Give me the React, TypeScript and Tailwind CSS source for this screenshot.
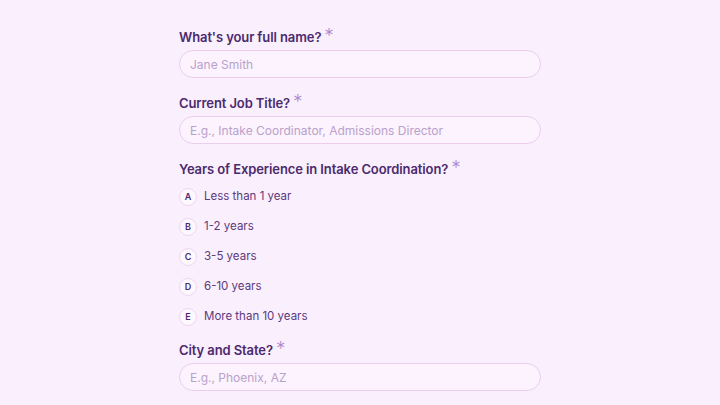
const font = { fontFamily: 'Inter, "Noto Sans", sans-serif' };

function Label({ text }: { text: string }) {
  return (
    <div className="h-[20px] flex items-start text-[13px] leading-[20px] font-semibold text-[#4b2a6e] tracking-[-0.1px]">
      <span>{text}</span>
      <span className="ml-[3px] text-[19px] leading-[17px] font-light text-[#ad88cd]">*</span>
    </div>
  );
}

function Input({ placeholder }: { placeholder: string }) {
  return (
    <input
      placeholder={placeholder}
      className="mt-[3px] w-full h-[28px] rounded-full border border-[#edcdef] bg-[#fcf3fe] px-[10px] text-[12px] text-[#4b2a6e] placeholder:text-[#b9a1cb] outline-none"
      style={font}
    />
  );
}

export default function App() {
  const options = [
    { key: 'A', label: 'Less than 1 year' },
    { key: 'B', label: '1-2 years' },
    { key: 'C', label: '3-5 years' },
    { key: 'D', label: '6-10 years' },
    { key: 'E', label: 'More than 10 years' },
  ];

  return (
    <div className="w-[720px] h-[405px] overflow-hidden bg-[#faeffd]" style={font}>
      <div className="ml-[179px] w-[362px] pt-[27px] flex flex-col">
        <Label text="What's your full name?" />
        <Input placeholder="Jane Smith" />

        <div className="mt-[15px]">
          <Label text="Current Job Title?" />
        </div>
        <Input placeholder="E.g., Intake Coordinator, Admissions Director" />

        <div className="mt-[15px]">
          <Label text="Years of Experience in Intake Coordination?" />
        </div>
        <div className="mt-[9px] flex flex-col gap-[12px]">
          {options.map((o) => (
            <div key={o.key} className="flex items-center h-[18px]">
              <div className="w-[18px] h-[18px] rounded-full border border-[#efd6f1] bg-[#fdf7fe] flex items-center justify-center text-[9px] font-semibold text-[#4b2a6e]">
                {o.key}
              </div>
              <span className="ml-[7px] text-[11.5px] text-[#5a3a7c]">{o.label}</span>
            </div>
          ))}
        </div>

        <div className="mt-[14px]">
          <Label text="City and State?" />
        </div>
        <Input placeholder="E.g., Phoenix, AZ" />
      </div>
    </div>
  );
}
